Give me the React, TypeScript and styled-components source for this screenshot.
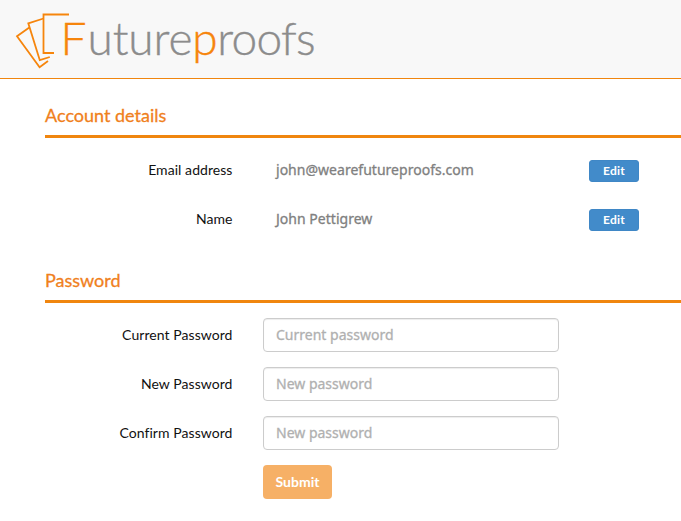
import React from "react";
import styled, { createGlobalStyle } from "styled-components";

const GlobalStyle = createGlobalStyle`
  * { box-sizing: border-box; }
  body {
    margin: 0;
    background: #fff;
    color: #1a1a1a;
    font-family: Lato, sans-serif;
    font-size: 14px;
    line-height: 20px;
    overflow: hidden;
  }
`;

const Header = styled.header`
  height: 79px;
  display: flex;
  background: #f8f8f8;
  border-bottom: 1px solid #f0860f;
`;

const LogoMark = styled.svg`
  flex: none;
  width: 58px;
  height: 60px;
  margin: 10px 0 0 13px;
`;

const Wordmark = styled.span`
  margin: 10px 0 0 -10.5px;
  font-size: 46px;
  line-height: 56px;
  font-weight: 300;
  letter-spacing: -0.08px;
  white-space: nowrap;
  color: #8c8c8c;
  -webkit-text-stroke: 0.4px currentColor;
`;

const Accent = styled.span<{ $spacing: number }>`
  color: #f6850c;
  letter-spacing: ${(p) => p.$spacing}px;
`;

const Tail = styled.span`
  letter-spacing: -0.75px;
`;

const Main = styled.main`
  padding-left: 45px;
`;

const Section = styled.section`
  padding-top: 23px;
  & + & {
    padding-top: 16px;
  }
`;

const Heading = styled.h2`
  height: 36px;
  margin: 0 0 15px;
  padding-top: 3px;
  border-bottom: 3px solid #f0860f;
  font-size: 18px;
  line-height: 20px;
  font-weight: 400;
  color: #f0801c;
  -webkit-text-stroke: 0.3px #f0801c;
`;

const Row = styled.div`
  display: grid;
  grid-template-columns: 188px 296px 50px;
  column-gap: 30px;
  align-items: center;
  height: 34px;
  margin-bottom: 15px;
`;

const Label = styled.label`
  padding-right: 0.5px;
  text-align: right;
  letter-spacing: 0.06px;
  color: #111;
`;

const Value = styled.span`
  padding-left: 13px;
  font-family: "Noto Sans", sans-serif;
  letter-spacing: 0.02px;
  color: #808080;
  -webkit-text-stroke: 0.3px #808080;
`;

const EditButton = styled.button`
  width: 50px;
  height: 22px;
  margin-top: 2px;
  padding: 0;
  border: 1px solid #3f87c6;
  border-radius: 3px;
  background: #428bca;
  color: #fff;
  font: 700 12px/18px Lato, sans-serif;
  letter-spacing: 0.2px;
`;

const Field = styled.input`
  width: 296px;
  height: 34px;
  padding: 5px 12px 7px;
  border: 1px solid #ccc;
  border-radius: 4px;
  background: #fff;
  box-shadow: inset 0 1px 1px rgba(0, 0, 0, 0.075);
  font: 14px/20px "Noto Sans", sans-serif;
  &::placeholder {
    color: #b0b0b0;
    opacity: 1;
    -webkit-text-stroke: 0.3px #b0b0b0;
  }
`;

const SubmitButton = styled.button`
  grid-column: 2;
  justify-self: start;
  width: 69px;
  height: 34px;
  padding: 0;
  border: 0;
  border-radius: 4px;
  background: #f6b066;
  color: #fff;
  font: 700 14px/20px Lato, sans-serif;
`;

const details = [
  { label: "Email address", value: "john@wearefutureproofs.com" },
  { label: "Name", value: "John Pettigrew" },
];

const fields = [
  { id: "current", label: "Current Password", placeholder: "Current password" },
  { id: "new", label: "New Password", placeholder: "New password" },
  { id: "confirm", label: "Confirm Password", placeholder: "New password" },
];

export default function App() {
  return (
    <>
      <GlobalStyle />
      <Header>
        <LogoMark viewBox="13 10 58 60" fill="none" stroke="#f6850c" strokeWidth="1.8">
          <path d="M69 14.5H43.5V53H54" />
          <path d="M43.5 18.5 28.3 23.3 39.8 60.2 49.8 57" />
          <path d="M29.3 27.5 17 36.2 39.6 67.2 48 61" />
        </LogoMark>
        <Wordmark>
          <Accent $spacing={1}>F</Accent>uture<Accent $spacing={-0.4}>p</Accent>
          <Tail>roofs</Tail>
        </Wordmark>
      </Header>
      <Main>
        <Section>
          <Heading>Account details</Heading>
          {details.map((d) => (
            <Row key={d.label}>
              <Label as="span">{d.label}</Label>
              <Value>{d.value}</Value>
              <EditButton>Edit</EditButton>
            </Row>
          ))}
        </Section>
        <Section>
          <Heading>Password</Heading>
          {fields.map((f) => (
            <Row key={f.id}>
              <Label htmlFor={f.id}>{f.label}</Label>
              <Field id={f.id} type="password" placeholder={f.placeholder} />
            </Row>
          ))}
          <Row>
            <SubmitButton>Submit</SubmitButton>
          </Row>
        </Section>
      </Main>
    </>
  );
}
